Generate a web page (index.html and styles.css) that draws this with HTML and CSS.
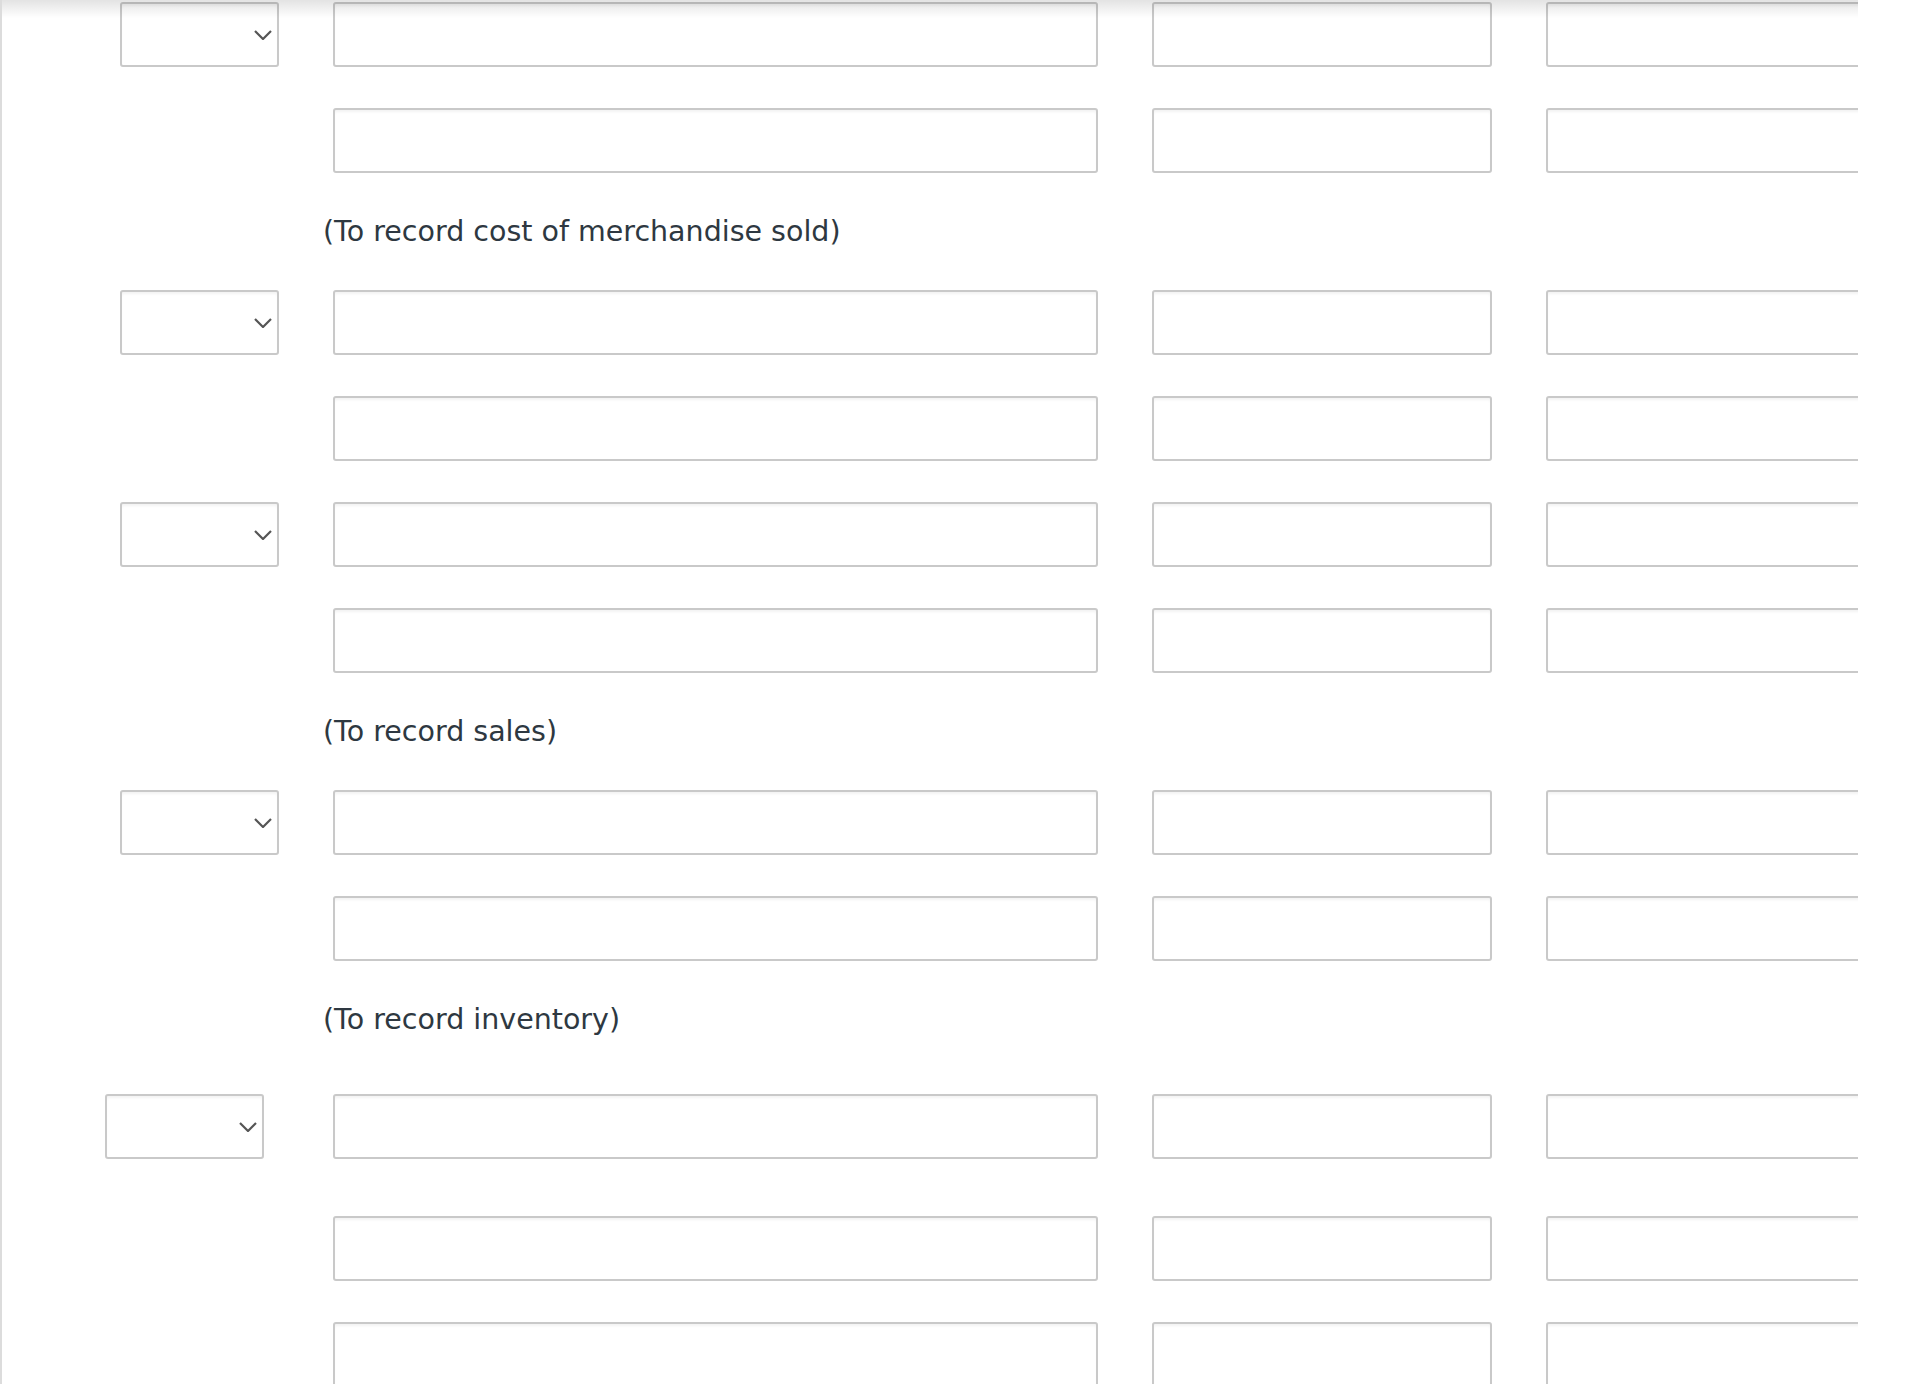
FILE: index.html
```html
<!DOCTYPE html>
<html lang="en">
<head>
<meta charset="utf-8">
<title>Journal entries</title>
<link rel="stylesheet" href="styles.css">
</head>
<body>
<div class="page">
  <div class="rows">
    <div class="row">
      <div class="select"><svg class="chev" viewBox="0 0 18 10" width="18" height="10"><path d="M1 1 L9 9 L17 1"/></svg></div>
      <input class="field" type="text"><input class="field" type="text"><input class="field" type="text">
    </div>
    <div class="row">
      <div class="blank"></div>
      <input class="field" type="text"><input class="field" type="text"><input class="field" type="text">
    </div>
    <div class="note">(To record cost of merchandise sold)</div>
    <div class="row">
      <div class="select"><svg class="chev" viewBox="0 0 18 10" width="18" height="10"><path d="M1 1 L9 9 L17 1"/></svg></div>
      <input class="field" type="text"><input class="field" type="text"><input class="field" type="text">
    </div>
    <div class="row">
      <div class="blank"></div>
      <input class="field" type="text"><input class="field" type="text"><input class="field" type="text">
    </div>
    <div class="row">
      <div class="select"><svg class="chev" viewBox="0 0 18 10" width="18" height="10"><path d="M1 1 L9 9 L17 1"/></svg></div>
      <input class="field" type="text"><input class="field" type="text"><input class="field" type="text">
    </div>
    <div class="row">
      <div class="blank"></div>
      <input class="field" type="text"><input class="field" type="text"><input class="field" type="text">
    </div>
    <div class="note">(To record sales)</div>
    <div class="row">
      <div class="select"><svg class="chev" viewBox="0 0 18 10" width="18" height="10"><path d="M1 1 L9 9 L17 1"/></svg></div>
      <input class="field" type="text"><input class="field" type="text"><input class="field" type="text">
    </div>
    <div class="row">
      <div class="blank"></div>
      <input class="field" type="text"><input class="field" type="text"><input class="field" type="text">
    </div>
    <div class="note">(To record inventory)</div>
    <div class="row row--spaced">
      <div class="select select--shifted"><svg class="chev" viewBox="0 0 18 10" width="18" height="10"><path d="M1 1 L9 9 L17 1"/></svg></div>
      <input class="field" type="text"><input class="field" type="text"><input class="field" type="text">
    </div>
    <div class="row row--spaced">
      <div class="blank"></div>
      <input class="field" type="text"><input class="field" type="text"><input class="field" type="text">
    </div>
    <div class="row">
      <div class="blank"></div>
      <input class="field" type="text"><input class="field" type="text"><input class="field" type="text">
    </div>
  </div>
</div>
</body>
</html>
```
FILE: styles.css
```css
html, body {
  margin: 0;
  padding: 0;
  background: #ffffff;
}

.page {
  position: relative;
  box-sizing: border-box;
  width: 1858px;
  height: 1384px;
  overflow: hidden;
  border-left: 2px solid #dcdcdc;
  padding: 2px 0 0 118px;
  font-family: "DejaVu Sans", Verdana, sans-serif;
}

.page::before {
  content: "";
  position: absolute;
  top: 0;
  left: 0;
  right: 0;
  height: 18px;
  background: linear-gradient(rgba(0, 0, 0, 0.11), rgba(0, 0, 0, 0));
  pointer-events: none;
  z-index: 2;
}

.rows {
  display: flex;
  flex-direction: column;
  gap: 41px;
}

.row {
  display: grid;
  grid-template-columns: 159px 765px 340px 400px;
  column-gap: 54px;
  height: 65px;
}

.row--spaced {
  margin-top: 16px;
}

.select,
.field {
  box-sizing: border-box;
  height: 65px;
  border: 2px solid #c9c9c9;
  border-radius: 3px;
  background: #ffffff;
  box-shadow: inset 0 3px 3px -1px rgba(0, 0, 0, 0.05);
}

.field {
  width: 100%;
  margin: 0;
  padding: 0 10px;
  font: inherit;
  outline: none;
}

.select {
  display: flex;
  align-items: center;
  justify-content: flex-end;
  padding-right: 5px;
}

.select--shifted {
  margin-left: -15px;
  margin-right: 15px;
}

.chev {
  display: block;
  fill: none;
  stroke: #555555;
  stroke-width: 2.2;
}

.note {
  height: 35px;
  line-height: 35px;
  margin-left: 203px;
  font-size: 28.5px;
  color: #2e3841;
}
```
